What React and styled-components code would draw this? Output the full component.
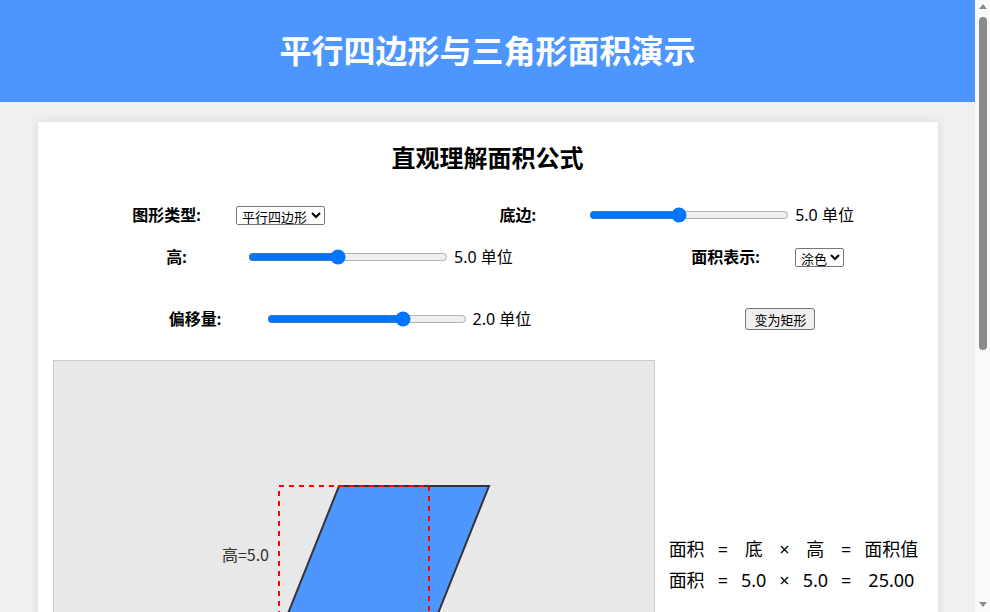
import { useState } from "react";
import styled, { createGlobalStyle } from "styled-components";

const GlobalStyle = createGlobalStyle`
    body{
        margin:0 15px 0 0;
        background:#f0f0f0;
        font-family:"Noto Sans", "Noto Sans CJK SC", sans-serif;
        color:#000;
    }
`

const ScrollTrack = styled.div`
    position:fixed;
    top:0;
    right:0;
    width:15px;
    height:100vh;
    background:#f9f9f9;
    display:flex;
    flex-direction:column;
    align-items:center;
`

const Arrow = styled.div`
    width:0;
    height:0;
    border-left:4px solid transparent;
    border-right:4px solid transparent;
    ${p => p.$down
        ? "border-top:5px solid #8a8a8a; margin-top:auto; margin-bottom:5px;"
        : "border-bottom:5px solid #8a8a8a; margin-top:4px;"}
`

const Thumb = styled.div`
    width:8px;
    height:333px;
    margin-top:8px;
    border-radius:4px;
    background:#8a8a8a;
`

const Header = styled.header`
    background:#4d96ff;
    color:#fff;
    text-align:center;
    padding:25px 0;
`

const PageTitle = styled.h1`
    margin:0;
    font-size:32px;
    line-height:52px;
    font-weight:bold;
`

const Card = styled.main`
    box-sizing:border-box;
    max-width:900px;
    margin:20px auto;
    padding:15px;
    background:#fff;
    box-shadow:0 0 10px rgba(0,0,0,0.1);
`

const CardTitle = styled.h2`
    margin:0;
    font-size:24px;
    line-height:42px;
    text-align:center;
`

const ControlRow = styled.div`
    display:flex;
    justify-content:space-around;
    align-items:center;
    margin-top:${p => p.$gap}px;
    margin-right:${p => p.$bleed ? -10 : 0}px;
`

const Group = styled.div`
    display:flex;
    align-items:center;
`

const Label = styled.label`
    width:71px;
    margin-right:34px;
    text-align:center;
    font-weight:bold;
    font-size:16px;
    line-height:24px;
    white-space:nowrap;
`

const Range = styled.input`
    width:200px;
    margin:2px;
`

const Value = styled.span`
    margin-left:4px;
    font-size:16px;
    line-height:24px;
    white-space:nowrap;
`

const Select = styled.select`
    width:${p => p.$w}px;
    height:19px;
    font-size:13px;
    font-family:inherit;
    padding:0 0 0 1px;
    border:1px solid #767676;
    border-radius:2px;
    background:#fff;
`

const Button = styled.button`
    width:70px;
    height:22px;
    padding:0;
    font-size:13px;
    font-family:inherit;
    background:#efefef;
    border:1px solid #767676;
    border-radius:3px;
`

const Stage = styled.div`
    display:flex;
    align-items:center;
    margin-top:29px;
`

const CanvasBox = styled.div`
    width:600px;
    height:400px;
    border:1px solid #ccc;
    background:#e8e8e8;
    flex-shrink:0;
    svg{ display:block; }
`

const FormulaPanel = styled.div`
    flex:1;
    margin-left:10px;
    display:flex;
    justify-content:center;
`

const FormulaGrid = styled.div`
    display:grid;
    grid-template-columns:repeat(7, auto);
    column-gap:13px;
    row-gap:4px;
    justify-items:center;
    font-size:18px;
    line-height:27px;
    margin-top:7px;
    white-space:nowrap;
`

const Notes = styled.section`
    margin-top:20px;
    padding:15px 20px;
    background:#f9f9f9;
    border-left:4px solid #4d96ff;
    font-size:16px;
    line-height:28px;
    h3{ margin:0 0 8px; font-size:18px; }
    ul{ margin:0; padding-left:20px; }
`

const SCALE = 30;

const App = () => {
    const [shape, setShape] = useState("parallelogram");
    const [base, setBase] = useState(5);
    const [height, setHeight] = useState(5);
    const [offset, setOffset] = useState(2);
    const [mode, setMode] = useState("fill");

    const b = base * SCALE;
    const h = height * SCALE;
    const o = offset * SCALE;
    const x0 = 300 - b / 2;
    const yTop = 200 - h / 2;
    const yBot = 200 + h / 2;
    const points = shape === "parallelogram"
        ? `${x0},${yBot} ${x0 + b},${yBot} ${x0 + b + o},${yTop} ${x0 + o},${yTop}`
        : `${x0},${yBot} ${x0 + b},${yBot} ${x0 + o},${yTop}`;
    const area = shape === "parallelogram" ? base * height : base * height / 2;

    return <>
        <GlobalStyle />
        <Header>
            <PageTitle>平行四边形与三角形面积演示</PageTitle>
        </Header>
        <Card>
            <CardTitle>直观理解面积公式</CardTitle>

            <ControlRow $gap={24} $bleed>
                <Group>
                    <Label>图形类型:</Label>
                    <Select $w={89} value={shape} onChange={e => setShape(e.target.value)}>
                        <option value="parallelogram">平行四边形</option>
                        <option value="triangle">三角形</option>
                    </Select>
                </Group>
                <Group>
                    <Label>底边:</Label>
                    <Range type="range" min={1} max={10} step={0.1} value={base}
                        onChange={e => setBase(Number(e.target.value))} />
                    <Value>{base.toFixed(1)} 单位</Value>
                </Group>
            </ControlRow>

            <ControlRow $gap={18} $bleed>
                <Group>
                    <Label>高:</Label>
                    <Range type="range" min={1} max={10} step={0.1} value={height}
                        onChange={e => setHeight(Number(e.target.value))} />
                    <Value>{height.toFixed(1)} 单位</Value>
                </Group>
                <Group>
                    <Label>面积表示:</Label>
                    <Select $w={49} value={mode} onChange={e => setMode(e.target.value)}>
                        <option value="fill">涂色</option>
                        <option value="grid">方格</option>
                    </Select>
                </Group>
            </ControlRow>

            <ControlRow $gap={38}>
                <Group>
                    <Label>偏移量:</Label>
                    <Range type="range" min={-5} max={5} step={0.1} value={offset}
                        onChange={e => setOffset(Number(e.target.value))} />
                    <Value>{offset.toFixed(1)} 单位</Value>
                </Group>
                <Button>变为矩形</Button>
            </ControlRow>

            <Stage>
                <CanvasBox>
                    <svg width="600" height="400" viewBox="0 0 600 400">
                        <polygon points={points} fill="#4d96ff" stroke="#333" strokeWidth="2" />
                        <rect x={x0} y={yTop} width={b} height={h} fill="none"
                            stroke="#ff0000" strokeWidth="2" strokeDasharray="5,5" />
                        <text x={x0 - 10} y={200} textAnchor="end" fontSize="16"
                            fill="#333" fontFamily="Noto Sans CJK SC, sans-serif">高={height.toFixed(1)}</text>
                        <text x={300} y={yBot + 24} textAnchor="middle" fontSize="16"
                            fill="#333" fontFamily="Noto Sans CJK SC, sans-serif">底={base.toFixed(1)}</text>
                    </svg>
                </CanvasBox>
                <FormulaPanel>
                    <FormulaGrid>
                        <span>面积</span><span>=</span><span>底</span><span>×</span><span>高</span><span>=</span><span>面积值</span>
                        <span>面积</span><span>=</span><span>{base.toFixed(1)}</span><span>×</span><span>{height.toFixed(1)}</span><span>=</span><span>{area.toFixed(2)}</span>
                    </FormulaGrid>
                </FormulaPanel>
            </Stage>

            <Notes>
                <h3>观察与思考</h3>
                <ul>
                    <li>拖动偏移量滑块，平行四边形的底和高不变，面积也不变。</li>
                    <li>沿高剪下一个三角形，平移到另一侧，就拼成了一个长方形。</li>
                    <li>长方形的长等于平行四边形的底，宽等于平行四边形的高。</li>
                    <li>两个完全一样的三角形可以拼成一个平行四边形。</li>
                    <li>所以三角形的面积 = 底 × 高 ÷ 2。</li>
                </ul>
            </Notes>
        </Card>

        <ScrollTrack>
            <Arrow />
            <Thumb />
            <Arrow $down />
        </ScrollTrack>
    </>
}

export default App;
